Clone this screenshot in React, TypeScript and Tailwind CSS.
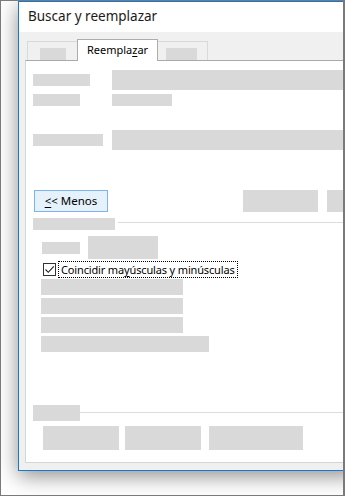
// Diálogo "Buscar y reemplazar" con los controles ocultos como bloques grises.
const FONT = "font-['Noto_Sans','Liberation_Sans',sans-serif]";

function Bar({ className }: { className: string }) {
  return <div className={`bg-[#d9d9d9] shrink-0 ${className}`} />;
}

function CheckIcon() {
  return (
    <svg width="11" height="11" viewBox="0 0 11 11" fill="none">
      <path d="M1.5 5.5l2.8 2.8L9.8 2.3" stroke="#222" strokeWidth="1.1" />
    </svg>
  );
}

export default function App() {
  return (
    <div className={`w-[345px] h-[496px] bg-white border-t border-l border-b border-r-2 border-[#7a7a7a] overflow-hidden ${FONT}`}>
      <div className="ml-[17px] w-[340px] h-[470px] border-t border-l border-b border-[#1778d2] bg-[#f0f0f0] flex flex-col shadow-[0_5px_20px_rgba(0,0,0,0.45)]">
        {/* barra de título */}
        <div className="h-[30px] bg-white pl-[9px] flex items-center text-[13.5px] text-[#1a1a1a] leading-none whitespace-nowrap">
          Buscar y reemplazar
        </div>

        <div className="flex-1 pl-[6px] pt-[7px] flex flex-col">
          {/* pestañas */}
          <div className="flex items-end h-[21px] pl-[2px]">
            <div className="shrink-0 w-[50px] h-[19px] border-l border-t border-[#d9d9d9] flex items-end pl-[12px]">
              <Bar className="w-[26px] h-[12px]" />
            </div>
            <div className="shrink-0 relative z-10 w-[81px] h-[22px] -mb-px bg-white border-l border-t border-r border-[#adadad] flex items-center justify-center text-[11px] text-black leading-none pb-[2px] whitespace-nowrap">
              Reempla<span className="underline underline-offset-2">z</span>ar
            </div>
            <div className="shrink-0 w-[50px] h-[19px] border-t border-r border-[#d9d9d9] flex items-end pl-[8px]">
              <Bar className="w-[31px] h-[12px]" />
            </div>
          </div>

          {/* panel */}
          <div className="flex-1 bg-white border-t border-t-[#a9a9a9] border-l border-b border-[#d5d5d5] pl-[7px] flex flex-col">
            <div className="flex mt-[9px] h-[20px]">
              <div className="shrink-0 w-[79px] pt-[4px]">
                <Bar className="w-[57px] h-[12px]" />
              </div>
              <Bar className="flex-1 h-[20px]" />
            </div>
            <div className="flex mt-[4px]">
              <div className="shrink-0 w-[79px]">
                <Bar className="w-[47px] h-[12px]" />
              </div>
              <Bar className="w-[60px] h-[12px]" />
            </div>
            <div className="flex mt-[24px] h-[20px]">
              <div className="shrink-0 w-[79px] pt-[4px]">
                <Bar className="w-[70px] h-[12px]" />
              </div>
              <Bar className="flex-1 h-[20px]" />
            </div>

            {/* botones */}
            <div className="flex mt-[40px] h-[22px]">
              <button
                type="button"
                className="shrink-0 ml-px w-[74px] h-[22px] border border-[#7eb4ea] bg-[#e5f1fb] text-[11.5px] text-black leading-none flex items-center justify-center whitespace-nowrap"
              >
                <span className="underline underline-offset-2">&lt;</span>&lt; Menos
              </button>
              <Bar className="ml-[135px] w-[75px] h-[22px]" />
              <Bar className="ml-[9px] w-[75px] h-[22px]" />
            </div>

            {/* grupo */}
            <div className="flex mt-[6px]">
              <Bar className="w-[82px] h-[12px]" />
              <div className="ml-[3px] mt-[4px] flex-1 h-px bg-[#dcdcdc]" />
            </div>
            <div className="flex mt-[6px]">
              <Bar className="ml-[9px] mt-[6px] w-[38px] h-[12px]" />
              <Bar className="ml-[8px] w-[70px] h-[23px]" />
            </div>

            <div className="flex items-start mt-[2px] ml-[10px] h-[17px]">
              <span className="shrink-0 mt-[2px] w-[13px] h-[13px] border border-[#333] bg-white flex items-center justify-center">
                <CheckIcon />
              </span>
              <label className="shrink-0 ml-[2px] h-[17px] px-[2px] border border-dotted border-black text-[11px] tracking-[-0.15px] text-black leading-none flex items-center whitespace-nowrap">
                Coincidir ma<span className="underline underline-offset-2">y</span>úsculas y minúsculas
              </label>
            </div>

            <div className="flex flex-col gap-[3px] mt-px ml-[8px]">
              <Bar className="w-[142px] h-[16px]" />
              <Bar className="w-[142px] h-[16px]" />
              <Bar className="w-[142px] h-[16px]" />
              <Bar className="w-[168px] h-[16px]" />
            </div>

            {/* grupo inferior */}
            <div className="flex mt-[53px]">
              <Bar className="w-[47px] h-[16px]" />
              <div className="mt-[7px] flex-1 h-px bg-[#dcdcdc]" />
            </div>
            <div className="flex mt-[5px] ml-[10px]">
              <Bar className="w-[76px] h-[24px]" />
              <Bar className="ml-[6px] w-[76px] h-[24px]" />
              <Bar className="ml-[8px] w-[94px] h-[24px]" />
            </div>
          </div>

          <div className="h-[7px]" />
        </div>
      </div>
    </div>
  );
}
